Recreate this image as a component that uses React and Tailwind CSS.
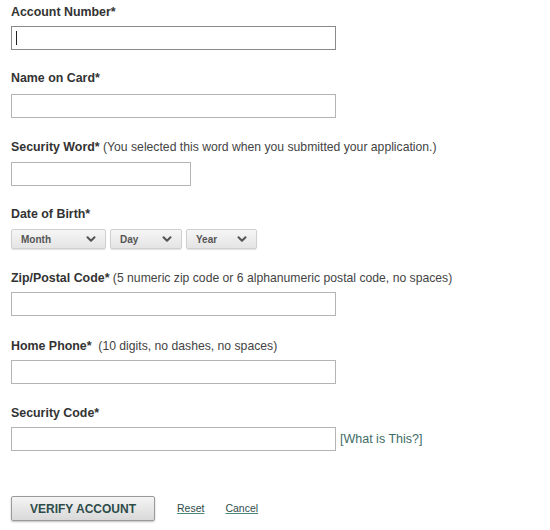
import { ChevronDown } from 'lucide-react';

function Label({ children, hint, gap = ' ' }) {
  return (
    <div className="h-4 text-[12.4px] leading-4 text-[#333]">
      <span className="font-bold">{children}*</span>
      {hint && (
        <span className="text-[12.2px] text-[#444] whitespace-pre">
          {gap}
          {hint}
        </span>
      )}
    </div>
  );
}

function TextBox({ width = 'w-[325px]', focused = false }) {
  return (
    <div
      className={`h-6 ${width} bg-white border ${
        focused ? 'border-[#8a8a8a]' : 'border-[#b4b4b4]'
      } flex items-center pl-1`}
    >
      {focused && <div className="w-px h-[14px] bg-[#222]" />}
    </div>
  );
}

function Select({ label, width }) {
  return (
    <div
      className={`h-5 ${width} flex items-center justify-between pl-[9px] pr-[7px] border border-[#d0d0d0] rounded-[2px] bg-gradient-to-b from-[#f6f6f6] to-[#e4e4e4] shadow-[0_1px_1px_rgba(0,0,0,0.12)]`}
    >
      <span className="text-[10px] font-bold text-[#555]">{label}</span>
      <ChevronDown size={14} strokeWidth={3.5} className="text-[#555]" />
    </div>
  );
}

export default function App() {
  return (
    <div className="w-[550px] h-[530px] bg-white pl-[11px] pt-1 font-['Liberation_Sans',Arial,sans-serif]">
      <Label>Account Number</Label>
      <div className="mt-[6px]">
        <TextBox focused />
      </div>

      <div className="mt-5">
        <Label>Name on Card</Label>
      </div>
      <div className="mt-2">
        <TextBox />
      </div>

      <div className="mt-[21px]">
        <Label hint="(You selected this word when you submitted your application.)">
          Security Word
        </Label>
      </div>
      <div className="mt-[7px]">
        <TextBox width="w-[180px]" />
      </div>

      <div className="mt-5">
        <Label>Date of Birth</Label>
      </div>
      <div className="mt-[7px] flex gap-1">
        <Select label="Month" width="w-[95px]" />
        <Select label="Day" width="w-[72px]" />
        <Select label="Year" width="w-[71px]" />
      </div>

      <div className="mt-[21px]">
        <Label hint="(5 numeric zip code or 6 alphanumeric postal code, no spaces)">
          Zip/Postal Code
        </Label>
      </div>
      <div className="mt-[6px]">
        <TextBox />
      </div>

      <div className="mt-[22px]">
        <Label gap="  " hint="(10 digits, no dashes, no spaces)">
          Home Phone
        </Label>
      </div>
      <div className="mt-[6px]">
        <TextBox />
      </div>

      <div className="mt-[21px]">
        <Label>Security Code</Label>
      </div>
      <div className="mt-[6px] flex items-center gap-[4px]">
        <TextBox />
        <a href="#" className="text-[12.5px] text-[#3d6b66]">
          [What is This?]
        </a>
      </div>

      <div className="mt-[45px] flex items-center">
        <button
          type="button"
          className="h-[25px] w-[144px] border border-[#9a9a9a] rounded-[2px] bg-gradient-to-b from-[#f4f4f4] to-[#d9d9d9] shadow-[0_1px_2px_rgba(0,0,0,0.25)] text-[12px] font-bold text-[#2e4c4a]"
        >
          VERIFY ACCOUNT
        </button>
        <a href="#" className="ml-[22px] text-[10.5px] text-[#2e4c4a] underline decoration-[#4a8a7a]">
          Reset
        </a>
        <a href="#" className="ml-[21px] text-[10.5px] text-[#2e4c4a] underline decoration-[#4a8a7a]">
          Cancel
        </a>
      </div>
    </div>
  );
}
